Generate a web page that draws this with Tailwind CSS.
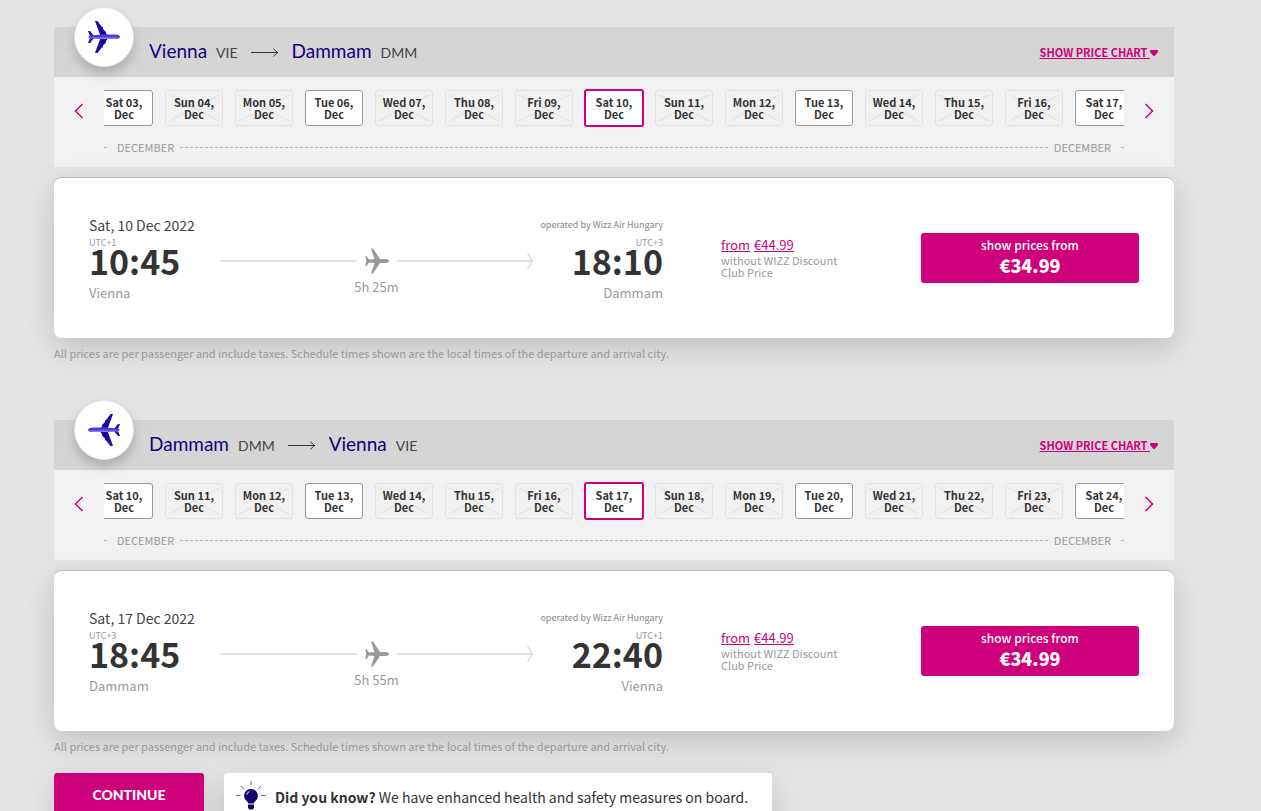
<!DOCTYPE html>
<html lang="en">
<head>
  <meta charset="UTF-8" />
  <meta name="viewport" content="width=device-width, initial-scale=1.0" />
  <title>Select flights</title>
  <script src="https://cdn.jsdelivr.net/npm/@tailwindcss/browser@4"></script>
</head>
<body class="bg-[#e4e4e4] font-['Noto_Sans_CJK_SC','Noto_Sans',sans-serif] text-[#333]">
  <main class="ml-[54px] mr-[87px] pt-[27px]">
    <div id="flights"></div>

    <!-- Footer actions -->
    <div class="flex items-start gap-5">
      <button type="button" class="w-[150px] h-[44px] pb-[2px] rounded-[3px] bg-[#ce007b] text-white text-[14px] font-black font-['Lato',sans-serif] shadow-[0_10px_30px_rgba(0,0,0,0.12)]">CONTINUE</button>
      <div class="flex items-center h-12 pl-3 pr-6 gap-2 rounded-[3px] bg-white shadow-[0_10px_30px_rgba(0,0,0,0.15)]">
        <svg class="w-[31px] h-8 shrink-0" viewBox="0 0 31 32" fill="none">
          <path d="M15 0v4M5 5l3 3.500M25 5l-3 3.500M0 14.500h4.500M25 14.500h4.500" stroke="#6a63ab" />
          <path d="M15 8a6.800 6.800 0 0 0-4.300 12.100c1 .9 1.300 1.700 1.400 2.400h5.800c.1-.7.400-1.500 1.400-2.400A6.800 6.800 0 0 0 15 8z" fill="#14066e" />
          <path d="M10.800 13.500a4.500 4.500 0 0 1 2.500-3" stroke="#fff" />
          <path d="M12 23.500h6v3.500l-1.500 1.500h-3L12 27z" fill="#14066e" />
        </svg>
        <p class="text-[14px] leading-5 whitespace-nowrap"><b>Did you know?</b> We have enhanced health and safety measures on board.</p>
      </div>
    </div>
  </main>

  <script>
    const flights = [
      {
        from: "Vienna", fromCode: "VIE", to: "Dammam", toCode: "DMM",
        date: "Sat, 10 Dec 2022", departs: "10:45", departsZone: "UTC+1", arrives: "18:10", arrivesZone: "UTC+3",
        duration: "5h 25m", firstDay: 3, back: false
      },
      {
        from: "Dammam", fromCode: "DMM", to: "Vienna", toCode: "VIE",
        date: "Sat, 17 Dec 2022", departs: "18:45", departsZone: "UTC+3", arrives: "22:40", arrivesZone: "UTC+1",
        duration: "5h 55m", firstDay: 10, back: true
      }
    ];
    const weekdays = ["Sat", "Sun", "Mon", "Tue", "Wed", "Thu", "Fri"];

    // One button in the date carousel. Flights run on Tuesdays and Saturdays.
    function dayButton(i, firstDay) {
      const weekday = weekdays[i % 7];
      const label = `${weekday} ${String(firstDay + i).padStart(2, "0")},<br>Dec`;
      if (i === 7) {
        return `<button type="button" aria-pressed="true" class="w-[58px] h-9 pb-px shrink-0 rounded-[2px] border border-[#ce007b] ring-1 ring-[#ce007b] bg-white text-[11px] leading-3 font-bold">${label}</button>`;
      }
      if (weekday === "Sat" || weekday === "Tue") {
        return `<button type="button" class="w-[58px] h-9 pb-px shrink-0 rounded-[3px] border border-[#999] bg-white text-[11px] leading-3 font-bold">${label}</button>`;
      }
      return `
        <button type="button" disabled class="relative w-[58px] h-9 pb-px shrink-0 rounded-[3px] border border-[#e2e2e2] text-[11px] leading-3 font-bold">
          <svg class="absolute inset-0 w-full h-full" viewBox="0 0 56 34" stroke="#e0e0e0" fill="none"><path d="M3 4l50 26M3 30l50-26" /></svg>
          <span class="relative">${label}</span>
        </button>`;
    }

    function flightSection(f) {
      let days = "";
      for (let i = 0; i < 15; i++) days += dayButton(i, f.firstDay);

      return `
      <section class="mb-[19px]">
        <header class="relative flex items-center h-[50px] pl-[95px] pr-4 bg-[#d5d5d5]">
          <div class="absolute left-5 -top-5 w-[60px] h-[60px] rounded-full bg-white border border-[#e8e8e8] shadow-[0_6px_12px_rgba(0,0,0,0.2)] flex items-center justify-center">
            <svg class="w-8 h-8 ${f.back ? "-scale-x-100" : ""}" viewBox="0 0 32 32">
              <path d="M7 0h2.500l4 5.500 1.500 1v1.500l3 3v1.500L20.500 15v2L18 20v1.500l-3 3V26l-1.500 1L9.500 32H7l5.500-15v-2z" fill="#1d0ba5" />
              <path d="M0 10h2l4 5v2l-4 5H0l2-5v-2z" fill="#1d0ba5" />
              <path d="M13.500 8l4 5h-4zM13.500 24l4-5h-4z" fill="#12067d" />
              <path d="M0 16l2-1.500 12-1h13c3 0 5 1 5 2.300 0 1.500-2 2.200-5 2.200H14l-12-.8z" fill="#4b3bdc" />
              <path d="M1 16.500h29l-3 1.500H14l-12-.8z" fill="#8880f0" />
            </svg>
          </div>
          <h2 class="flex items-baseline gap-[9px] font-['Lato',sans-serif] text-[19px] leading-6 text-[#14007d]">
            ${f.from} <small class="text-[14px] text-[#444]">${f.fromCode}</small>
            <svg class="w-7 h-[11px] mx-1" viewBox="0 0 28 11" fill="none" stroke="#333"><path d="M0 5.500h27M22.500 1.500c1.500 2 3 3.500 4.500 4-1.500.5-3 2-4.500 4" /></svg>
            ${f.to} <small class="text-[14px] text-[#444]">${f.toCode}</small>
          </h2>
          <a href="#" class="ml-auto flex items-center text-[11px] leading-4 font-bold text-[#ce007b]">
            <span class="underline whitespace-pre">SHOW PRICE CHART </span>
            <svg class="w-2 h-[6px] mt-[2px]" viewBox="0 0 8 6" fill="currentColor"><path d="M1 0h6q1 0 1 1v1L5 5.500q-1 1-2 0L0 2V1q0-1 1-1z" /></svg>
          </a>
        </header>

        <!-- Date carousel -->
        <div class="flex h-[90px] pt-[13px] bg-[#f1f1f1]">
          <button type="button" aria-label="Earlier dates" class="w-[50px] h-[42px] shrink-0 flex items-center justify-center text-[#ce007b]">
            <svg class="w-[10px] h-4" viewBox="0 0 10 16" fill="none" stroke="currentColor" stroke-width="1.500"><path d="M8.500 1l-7 7 7 7" /></svg>
          </button>
          <div class="flex-1 min-w-0">
            <div class="flex justify-center gap-3 overflow-x-clip">${days}</div>
            <div class="mt-[13px] flex items-center text-[11px] leading-4 text-[#999]">
              <span class="w-[3px] border-t border-[#b5b5b5]"></span>
              <span class="ml-[10px]">DECEMBER</span>
              <span class="flex-1 mx-[6px] border-t border-dashed border-[#b5b5b5]"></span>
              <span class="mr-[10px]">DECEMBER</span>
              <span class="w-[3px] border-t border-[#b5b5b5]"></span>
            </div>
          </div>
          <button type="button" aria-label="Later dates" class="w-[50px] h-[42px] shrink-0 flex items-center justify-center text-[#ce007b]">
            <svg class="w-[10px] h-4" viewBox="0 0 10 16" fill="none" stroke="currentColor" stroke-width="1.500"><path d="M1.500 1l7 7-7 7" /></svg>
          </button>
        </div>

        <!-- Flight card -->
        <div class="mt-[10px] flex items-center px-[35px] py-[35px] rounded-lg border-t border-[#bbb] bg-white shadow-[0_10px_30px_rgba(0,0,0,0.16)]">
          <div class="w-[131px] text-[#999]">
            <p class="text-[14px] leading-6 text-[#444]">${f.date}</p>
            <p class="text-[9px] leading-3">${f.departsZone}</p>
            <p class="text-[34px] leading-6 font-bold text-[#333]">${f.departs}</p>
            <p class="mt-[10px] text-[13px] leading-5">${f.from}</p>
          </div>
          <div class="flex-1 pt-7 text-center text-[#999]">
            <div class="flex items-center gap-2">
              <span class="flex-1 h-[2px] bg-[#e2e2e2]"></span>
              <svg class="w-6 h-[26px]" viewBox="0 0 24 26" fill="currentColor"><path d="M6 .5h2L15 11h5.500c2 0 3.500 1 3.500 2s-1.500 2-3.500 2H15L8 25.500H6L9.500 15 4 14.500 1.500 18H.3l1-5-1-5h1.200L4 11.500l5.500-.5z" /></svg>
              <span class="flex-1 flex items-center">
                <span class="flex-1 h-[2px] bg-[#e2e2e2]"></span>
                <svg class="w-[6px] h-4 -ml-[6px]" viewBox="0 0 6 16" fill="none" stroke="#dedede" stroke-width="1.500"><path d="M.5 0l5 8-5 8" /></svg>
              </span>
            </div>
            <p class="mt-1 text-[13px] leading-[18px]">${f.duration}</p>
          </div>
          <div class="w-[130px] text-right text-[#999]">
            <p class="text-[9px] leading-6 text-[#888]">operated by Wizz Air Hungary</p>
            <p class="text-[9px] leading-3">${f.arrivesZone}</p>
            <p class="text-[34px] leading-6 font-bold text-[#333]">${f.arrives}</p>
            <p class="mt-[10px] text-[13px] leading-5">${f.to}</p>
          </div>
          <div class="w-[200px] ml-[58px] pb-[2px] text-[11px] leading-3 text-[#999]">
            <a href="#" class="flex gap-1 text-[13px] leading-[18px] text-[#ce007b]"><span class="underline">from</span><span class="underline">€44.99</span></a>
            <p>without WIZZ Discount<br>Club Price</p>
          </div>
          <button type="button" class="w-[218px] h-[50px] pb-[6px] rounded-[3px] bg-[#ce007b] text-white">
            <span class="block text-[12px] leading-5 font-medium">show prices from</span>
            <span class="block text-[18px] leading-5 font-black">€34.99</span>
          </button>
        </div>
        <p class="mt-[7px] text-[11px] leading-4 text-[#999]">All prices are per passenger and include taxes. Schedule times shown are the local times of the departure and arrival city.</p>
      </section>`;
    }

    document.getElementById("flights").innerHTML = flights.map(flightSection).join('<div class="h-10"></div>');
  </script>
</body>
</html>
